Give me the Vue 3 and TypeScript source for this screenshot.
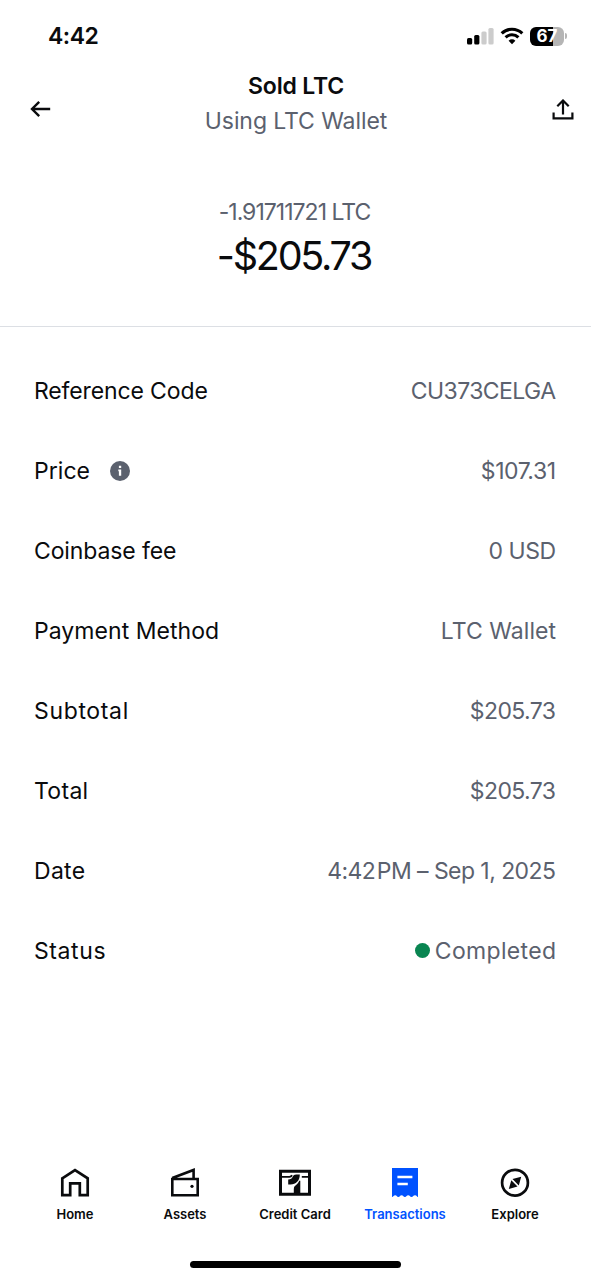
<script setup lang="ts">
interface Row {
  label: string
  value: string
  labelSpacing: number
  valueSpacing: number
  info?: boolean
  status?: boolean
}

const rows: Row[] = [
  { label: 'Reference Code', value: 'CU373CELGA', labelSpacing: -0.13, valueSpacing: -0.58 },
  { label: 'Price', value: '$107.31', labelSpacing: 0.05, valueSpacing: -0.45, info: true },
  { label: 'Coinbase fee', value: '0 USD', labelSpacing: -0.12, valueSpacing: -0.5 },
  { label: 'Payment Method', value: 'LTC Wallet', labelSpacing: 0.05, valueSpacing: 0.05 },
  { label: 'Subtotal', value: '$205.73', labelSpacing: 0.65, valueSpacing: -0.6 },
  { label: 'Total', value: '$205.73', labelSpacing: 0.3, valueSpacing: -0.6 },
  { label: 'Date', value: '4:42\u200APM – Sep 1, 2025', labelSpacing: 0.3, valueSpacing: -0.56 },
  { label: 'Status', value: 'Completed', labelSpacing: 0.6, valueSpacing: 0.32, status: true },
]

const tabs = [
  { id: 'home', label: 'Home' },
  { id: 'assets', label: 'Assets' },
  { id: 'card', label: 'Credit Card' },
  { id: 'transactions', label: 'Transactions' },
  { id: 'explore', label: 'Explore' },
]
const activeTab = 'transactions'
</script>

<template>
  <main class="screen">
    <div class="status-bar">
      <span class="clock">4:42</span>
      <div class="indicators">
        <svg class="signal" width="27" height="18" viewBox="0 0 27 18">
          <rect x="0" y="11" width="5.2" height="6.5" rx="1.5" fill="#000" />
          <rect x="7.2" y="8" width="5.2" height="9.5" rx="1.5" fill="#000" />
          <rect x="14.4" y="4.6" width="5.2" height="12.9" rx="1.5" fill="#ccc" />
          <rect x="21.4" y="1" width="5.2" height="16.5" rx="1.5" fill="#ccc" />
        </svg>
        <svg class="wifi" width="24" height="18" viewBox="0 0 24 18" fill="none" stroke="#000">
          <path d="M1.7 6.4a14.7 14.7 0 0 1 20.6 0" stroke-width="3.1" />
          <path d="M5.6 10.4a9.2 9.2 0 0 1 12.800 0" stroke-width="3.1" />
          <path d="M8.6 13.7a4.900 4.900 0 0 1 6.800 0L12 17.200z" fill="#000" stroke="none" />
        </svg>
        <div class="battery"><span>67</span></div>
        <i class="battery-tip"></i>
      </div>
    </div>

    <header class="header">
      <svg class="back" width="22" height="18" viewBox="0 0 22 18" fill="none" stroke="#0a0b0d" stroke-width="2.4">
        <path d="M20.200 9H2M9.200 1.800 2 9l7.200 7.200" />
      </svg>
      <div class="titles">
        <h1>Sold LTC</h1>
        <p>Using LTC Wallet</p>
      </div>
      <svg class="share" width="22" height="22" viewBox="0 0 22 22" fill="none" stroke="#0a0b0d" stroke-width="2.200">
        <path d="M1.600 13.500v5.800h18.800v-5.800M11 15.600V1.500M5.300 7.200 11 1.500l5.700 5.700" />
      </svg>
    </header>

    <section class="amount">
      <p class="crypto">-1.91711721 LTC</p>
      <p class="fiat">-$205.73</p>
    </section>

    <dl class="details">
      <div v-for="row in rows" :key="row.label" class="row">
        <dt>
          <span :style="{ letterSpacing: row.labelSpacing + 'px' }">{{ row.label }}</span>
          <svg v-if="row.info" class="info" width="20" height="20" viewBox="0 0 20 20">
            <circle cx="10" cy="10" r="10" fill="#5b616e" />
            <path d="M8.900 4.800h2.300V7H8.900zM8.300 8.500h2.900v6.200H8.900v-4.400h-.6z" fill="#fff" />
          </svg>
        </dt>
        <dd>
          <i v-if="row.status" class="dot"></i>
          <span :style="{ letterSpacing: row.valueSpacing + 'px', marginRight: -row.valueSpacing + 'px' }">{{ row.value }}</span>
        </dd>
      </div>
    </dl>

    <nav class="tabs">
      <a v-for="tab in tabs" :key="tab.id" :class="['tab', tab.id, { active: tab.id === activeTab }]">
        <svg v-if="tab.id === 'home'" width="30" height="30" viewBox="0 0 30 30" fill="none" stroke="#0a0b0d" stroke-width="2.700">
          <path d="M2.300 10.300 15 2.200 27.700 10.300v16.900h-7.900V15.400h-9.600v11.800H2.300z" />
        </svg>
        <svg v-else-if="tab.id === 'assets'" width="30" height="30" viewBox="0 0 30 30" fill="none" stroke="#0a0b0d" stroke-width="2.600">
          <path d="M2.300 11h25.400v16.200H2.300zM2.300 10 23.600 2v9" />
          <circle cx="22" cy="18.300" r="1.600" fill="#0a0b0d" stroke="none" />
        </svg>
        <svg v-else-if="tab.id === 'card'" width="32" height="30" viewBox="0 0 32 30" fill="none" stroke="#0a0b0d">
          <path d="M1.500 3.300h29v23h-29z" stroke-width="3" />
          <path d="M3 8.800h7.500c1.300 0 2-.6 2.600-1.600M29.500 8.800h-6.700" stroke-width="1.800" />
          <path d="M20.800 6.600h-3.600c-1.800 0-2.800.9-3.500 2.200-.9 1.800-1.900 2.800-4.500 2.800v4.900h2.300c5.400 0 9.300-3.500 9.300-9.900z" fill="#0a0b0d" stroke="none" />
          <path d="M14.800 26v-4.700c0-2.600 1.300-3.600 2.800-4.800 1.200-1 2-2 2.500-3.700h1.200V26z" fill="#0a0b0d" stroke="none" />
        </svg>
        <svg v-else-if="tab.id === 'transactions'" width="30" height="30" viewBox="0 0 30 30">
          <path d="M2 0h26v29c-1.200 0-1.300-1.700-3-1.700s-1.900 1.700-3.500 1.700-1.700-1.700-3.300-1.700-1.700 1.700-3.300 1.700-1.700-1.700-3.300-1.700S10 29 8.400 29s-1.700-1.700-3.200-1.700S3.400 29 2 29z" fill="#0052ff" />
          <path d="M7.400 9h15M7.400 16h10.400" stroke="#fff" stroke-width="2.500" />
        </svg>
        <svg v-else width="30" height="30" viewBox="0 0 30 30">
          <circle cx="15" cy="14.700" r="12.900" fill="none" stroke="#0a0b0d" stroke-width="2.700" />
          <path d="m21.200 8.700-8.700 2.400 6.300 6.300zM8.800 20.900l2.500-8.600 6.200 6.200z" fill="#0a0b0d" />
        </svg>
        <span>{{ tab.label }}</span>
      </a>
    </nav>

    <div class="home-indicator"></div>
  </main>
</template>

<style>
body {
  margin: 0;
  background: #fff;
}
</style>

<style scoped>
.screen {
  box-sizing: border-box;
  width: 591px;
  height: 1280px;
  display: flex;
  flex-direction: column;
  overflow: hidden;
  background: #fff;
  color: #0a0b0d;
  font-family: Inter, "Liberation Sans", sans-serif;
}
h1,
p,
dl,
dd {
  margin: 0;
}
svg {
  display: block;
  flex: none;
}
.status-bar {
  height: 72px;
  box-sizing: border-box;
  padding: 0 24px 0 48px;
  display: flex;
  align-items: center;
  justify-content: space-between;
}
.clock {
  font-size: 23px;
  font-weight: 600;
  letter-spacing: -0.45px;
}
.indicators {
  display: flex;
  align-items: center;
}
.wifi {
  margin: 0 6px 0 6px;
}
.battery {
  width: 34px;
  height: 19px;
  border-radius: 6px;
  background: linear-gradient(90deg, #000 67%, #b5b5b5 67%);
  color: #fff;
  font-size: 17px;
  font-weight: 700;
  line-height: 19px;
  text-align: center;
}
.battery-tip {
  width: 2px;
  height: 6px;
  margin-left: 1px;
  border-radius: 0 2px 2px 0;
  background: #b5b5b5;
}
.header {
  height: 74px;
  padding: 0 18px 0 30px;
  display: flex;
  justify-content: space-between;
}
.back {
  margin-top: 28px;
}
.share {
  margin: 27px -1px 0 0;
}
.titles {
  text-align: center;
  line-height: 28px;
}
.titles h1 {
  font-size: 23px;
  font-weight: 600;
  letter-spacing: -0.2px;
  margin-right: 12px;
}
.titles p {
  margin: 7px 12px 0 0;
  font-size: 23px;
  letter-spacing: -0.08px;
  color: #5b616e;
}
.amount {
  height: 181px;
  padding-top: 52px;
  box-sizing: border-box;
  border-bottom: 1px solid #dcdfe4;
  text-align: center;
}
.crypto {
  margin-right: 2px;
  font-size: 23px;
  line-height: 28px;
  letter-spacing: -0.98px;
  color: #5b616e;
}
.fiat {
  margin: 6px 3px 0 0;
  font-size: 39.5px;
  line-height: 48px;
  letter-spacing: -2.25px;
}
.details {
  padding: 24px 35px 0 34px;
}
.row {
  height: 80px;
  display: flex;
  align-items: center;
  justify-content: space-between;
  font-size: 23px;
  line-height: 28px;
}
dt,
dd {
  display: flex;
  align-items: center;
}
dt {
  gap: 20px;
}
.info {
  margin-bottom: 1px;
}
dd {
  color: #5b616e;
  white-space: nowrap;
}
.dot {
  width: 15px;
  height: 15px;
  margin: 0 5px 1px 0;
  border-radius: 50%;
  background: #098551;
}
.tabs {
  margin-top: auto;
  height: 93px;
  padding: 0 21px 0 20px;
  display: flex;
}
.tab {
  flex: 1;
  display: flex;
  flex-direction: column;
  align-items: center;
  gap: 7px;
  font-size: 13px;
  font-weight: 600;
  line-height: 18px;
}
.tab.active {
  color: #0052ff;
}
.home-indicator {
  width: 211px;
  height: 7px;
  margin: 0 auto 12px;
  border-radius: 4px;
  background: #000;
}
</style>
